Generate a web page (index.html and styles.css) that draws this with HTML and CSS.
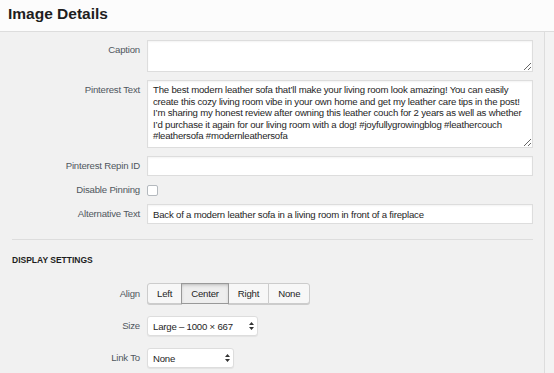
FILE: index.html
```html
<!DOCTYPE html>
<html>
  <head>
    <title>Image Details</title>
    <link rel="stylesheet" href="styles.css">
  </head>
  <body>
    <div class="header">
      <h1>Image Details</h1>
    </div>

    <div class="frame">
      <div class="settings">
        <div class="fields">
          <div class="row">
            <label class="label">Caption</label>
            <textarea class="field caption"></textarea>
          </div>
          <div class="row">
            <label class="label">Pinterest Text</label>
            <textarea class="field pin-text" wrap="off">The best modern leather sofa that’ll make your living room look amazing! You can easily
create this cozy living room vibe in your own home and get my leather care tips in the post!
I’m sharing my honest review after owning this leather couch for 2 years as well as whether
I’d purchase it again for our living room with a dog! #joyfullygrowingblog #leathercouch
#leathersofa #modernleathersofa</textarea>
          </div>
          <div class="row">
            <label class="label">Pinterest Repin ID</label>
            <input type="text" class="field text">
          </div>
          <div class="row row-check">
            <label class="label">Disable Pinning</label>
            <input type="checkbox" class="check">
          </div>
          <div class="row">
            <label class="label">Alternative Text</label>
            <input type="text" class="field text" value="Back of a modern leather sofa in a living room in front of a fireplace">
          </div>
        </div>

        <hr class="divider">

        <h2 class="section-title">Display Settings</h2>

        <div class="fields display">
          <div class="row row-mid">
            <label class="label">Align</label>
            <div class="button-group">
              <button class="btn">Left</button>
              <button class="btn active">Center</button>
              <button class="btn">Right</button>
              <button class="btn">None</button>
            </div>
          </div>
          <div class="row row-mid">
            <label class="label">Size</label>
            <div class="select-wrap size">
              <select class="select">
                <option>Large – 1000 × 667</option>
              </select>
              <svg class="arrows" width="5" height="8" viewBox="0 0 5 8"><path d="M2.5 0 L5 3 H0 Z M2.5 8 L5 5 H0 Z" fill="#333"/></svg>
            </div>
          </div>
          <div class="row row-mid">
            <label class="label">Link To</label>
            <div class="select-wrap link">
              <select class="select">
                <option>None</option>
              </select>
              <svg class="arrows" width="5" height="8" viewBox="0 0 5 8"><path d="M2.5 0 L5 3 H0 Z M2.5 8 L5 5 H0 Z" fill="#333"/></svg>
            </div>
          </div>
        </div>
      </div>
      <div class="side"></div>
    </div>
  </body>
</html>
```

FILE: styles.css
```css
html, body {
  margin: 0;
  height: 100%;
  overflow: hidden;
}

body {
  font-family: "Liberation Sans", Arial, sans-serif;
  font-size: 9.6px;
  letter-spacing: -0.2px;
  color: #23282d;
  background-color: #f1f1f1;
}

.header {
  height: 31px;
  background-color: #fcfcfc;
  border-bottom: 1px solid #dddddd;
  padding-left: 8px;
}

.header h1 {
  margin: 0;
  font-size: 15.5px;
  line-height: 28px;
  font-weight: bold;
  letter-spacing: 0;
  color: #1e1e1e;
}

.frame {
  display: flex;
  height: 100%;
}

.settings {
  box-sizing: border-box;
  width: 545px;
  border-right: 1px solid #dddddd;
  padding: 8px 11px 0 0;
}

.side {
  flex: 1;
  background-color: #f3f3f3;
}

.fields {
  display: flex;
  flex-direction: column;
  gap: 8px;
}

.row {
  display: flex;
  align-items: flex-start;
  gap: 7px;
}

.row-check,
.row-mid {
  align-items: center;
}

.label {
  flex: 0 0 140px;
  text-align: right;
  line-height: 20px;
  color: #50575e;
}

.row-check .label {
  line-height: 12px;
}

.field {
  box-sizing: border-box;
  flex: 1;
  margin: 0;
  font-family: inherit;
  font-size: 9.6px;
  letter-spacing: -0.2px;
  color: #1e1e1e;
  background-color: #ffffff;
  border: 1px solid #dddddd;
  box-shadow: inset 0 1px 2px rgba(0, 0, 0, 0.05);
  outline: none;
}

textarea.field {
  padding: 3px 5px;
  line-height: 11.5px;
  overflow: hidden;
}

.caption {
  height: 32px;
}

.pin-text {
  height: 68px;
}

.text {
  height: 20px;
  padding: 0 5px;
}

.check {
  appearance: none;
  box-sizing: border-box;
  width: 11px;
  height: 11px;
  margin: 0;
  background-color: #ffffff;
  border: 1px solid #b4b9be;
  border-radius: 2px;
}

.divider {
  margin: 15px 0 0 12px;
  border: none;
  border-top: 1px solid #dddddd;
}

.section-title {
  margin: 15px 0 0 12px;
  font-size: 8.5px;
  line-height: 10px;
  font-weight: bold;
  letter-spacing: 0;
  text-transform: uppercase;
  color: #1e1e1e;
}

.display {
  margin-top: 18px;
  gap: 12px;
}

.display .label {
  line-height: 14px;
}

.button-group {
  display: flex;
}

.btn {
  height: 21px;
  margin: 0 0 0 -1px;
  padding: 0 9px;
  font-family: inherit;
  font-size: 9.6px;
  letter-spacing: -0.2px;
  color: #1e1e1e;
  background-color: #f7f7f7;
  border: 1px solid #cccccc;
  box-shadow: 0 1px 0 #cccccc;
  border-radius: 0;
}

.btn:first-child {
  margin-left: 0;
  border-radius: 3px 0 0 3px;
}

.btn:last-child {
  border-radius: 0 3px 3px 0;
}

.btn.active {
  position: relative;
  background-color: #eeeeee;
  border-color: #999999;
  box-shadow: inset 0 2px 5px -3px rgba(0, 0, 0, 0.5);
}

.select-wrap {
  position: relative;
}

.select {
  appearance: none;
  box-sizing: border-box;
  height: 20px;
  margin: 0;
  padding: 0 12px 0 5px;
  font-family: inherit;
  font-size: 9.6px;
  letter-spacing: -0.2px;
  color: #1e1e1e;
  background-color: #ffffff;
  border: 1px solid #dddddd;
  border-radius: 3px;
  box-shadow: 0 1px 1px rgba(0, 0, 0, 0.06);
  outline: none;
}

.size .select {
  width: 111px;
}

.link .select {
  width: 87px;
}

.arrows {
  position: absolute;
  top: 6px;
  right: 4px;
}
```
